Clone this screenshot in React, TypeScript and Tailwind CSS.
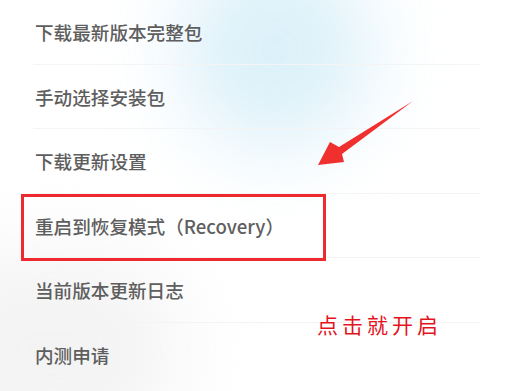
const items = [
  '下载最新版本完整包',
  '手动选择安装包',
  '下载更新设置',
  '重启到恢复模式（Recovery）',
  '当前版本更新日志',
  '内测申请',
];

export default function App() {
  return (
    <main
      className="relative w-[520px] h-[391px] overflow-hidden bg-white"
      style={{ fontFamily: '"Noto Sans CJK SC", "Noto Sans", sans-serif' }}
    >
      {/* soft background glow */}
      <div className="absolute left-[180px] top-[-50px] w-[190px] h-[200px] rounded-full bg-[#d3edf8] blur-[40px] opacity-80" />
      <div className="absolute left-[-80px] top-[250px] w-[260px] h-[200px] rounded-full bg-[#ececec] blur-[40px] opacity-60" />

      {/* Settings list */}
      <ul className="relative flex flex-col">
        {items.map((label, i) => (
          <li key={label} className="h-[64.6px] flex flex-col">
            <div className="flex-1 flex items-center pl-[35px] pt-px text-[18.6px] font-medium text-[#5e5e5e] leading-none">
              {label}
            </div>
            {i < items.length - 1 && <div className="ml-[33px] mr-[40px] h-px bg-[#f4f4f4]" />}
          </li>
        ))}
      </ul>

      {/* Highlight box */}
      <div className="absolute left-[21px] top-[194px] w-[305px] h-[67px] border-[3px] border-[#ec2a2f]" />

      {/* Arrow */}
      <svg className="absolute left-0 top-0" width="520" height="391" viewBox="0 0 520 391">
        <polygon
          points="413,101 339,147 330,142 318,165 344,162 342,154"
          fill="#f0302f"
        />
      </svg>

      {/* Annotation */}
      <div className="absolute left-[317px] top-[314px] text-[21px] tracking-[4px] text-[#e3141d] leading-none">
        点击就开启
      </div>
    </main>
  );
}
